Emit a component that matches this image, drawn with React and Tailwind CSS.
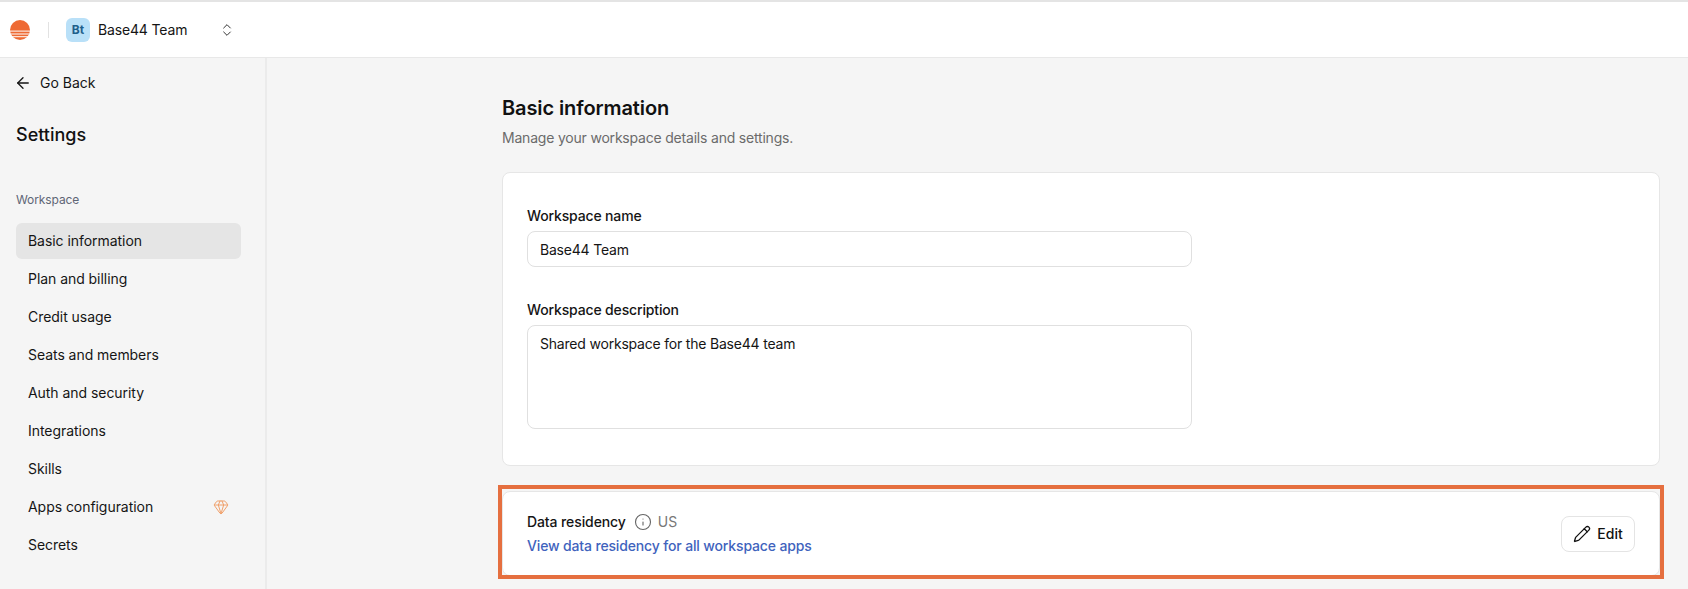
import { ArrowLeft, ChevronsUpDown, Gem, Info, Pencil } from 'lucide-react'

const NAV_ITEMS = [
  'Basic information',
  'Plan and billing',
  'Credit usage',
  'Seats and members',
  'Auth and security',
  'Integrations',
  'Skills',
  'Apps configuration',
  'Secrets',
]

function Logo() {
  return (
    <svg viewBox="0 0 20 20" className="h-5 w-5 shrink-0">
      <defs>
        <clipPath id="sun">
          <circle cx="10" cy="10" r="10" />
        </clipPath>
      </defs>
      <g clipPath="url(#sun)" fill="#ee6a34">
        <rect x="0" y="0" width="20" height="10.6" />
        <rect x="0" y="11.6" width="20" height="1.9" />
        <rect x="0" y="14.5" width="20" height="1.7" />
        <rect x="0" y="17.2" width="20" height="2.8" />
      </g>
    </svg>
  )
}

function Header() {
  return (
    <header className="flex h-[58px] shrink-0 items-center border-t-2 border-b border-t-[#e4e4e4] border-b-[#e8e8e8] bg-white pl-[10px]">
      <Logo />
      <div className="ml-[18px] h-4 w-px bg-[#e2e2e2]" />
      <div className="ml-[17px] flex h-6 w-6 items-center justify-center rounded-md bg-[#b9e0f8] text-[12px] font-bold text-[#1f5f8b]">
        Bt
      </div>
      <span className="ml-2 w-[120px] text-sm tracking-[-0.15px] text-[#151515]">Base44 Team</span>
      <ChevronsUpDown className="ml-[1px] h-4 w-4 text-[#333]" strokeWidth={1.5} />
    </header>
  )
}

function Sidebar() {
  return (
    <aside className="w-[267px] shrink-0 border-r-2 border-[#ebebeb] px-4 pt-[15px]">
      <button type="button" className="-ml-[2px] flex items-center gap-2 text-sm text-[#151515]">
        <ArrowLeft className="h-[18px] w-[18px]" strokeWidth={1.75} />
        Go Back
      </button>
      <h2 className="mt-[28px] text-lg font-medium leading-7 text-[#111]">Settings</h2>
      <p className="mt-[43px] text-xs tracking-[-0.1px] text-[#5f6675]">Workspace</p>
      <nav className="mt-[15px] flex w-[225px] flex-col gap-[2px]">
        {NAV_ITEMS.map((item, i) => (
          <div
            key={item}
            className={`flex h-9 items-center justify-between rounded-md px-3 text-sm tracking-[-0.05px] text-[#151515] ${
              i === 0 ? 'bg-[#e5e5e5]' : ''
            }`}
          >
            {item}
            {item === 'Apps configuration' && (
              <Gem className="h-4 w-4 text-[#f0a06a]" strokeWidth={1.5} />
            )}
          </div>
        ))}
      </nav>
    </aside>
  )
}

function Main() {
  return (
    <main className="flex-1 pl-[235px] pr-7 pt-[36px]">
      <h1 className="text-xl font-semibold leading-7 tracking-[-0.1px] text-[#111]">Basic information</h1>
      <p className="mt-[6px] text-sm tracking-[-0.2px] text-[#6b6b6b]">Manage your workspace details and settings.</p>

      <section className="mt-[24px] h-[294px] rounded-lg border border-[#e6e6e6] bg-white px-6 pt-[33px]">
        <label className="block text-sm font-medium leading-5 tracking-[-0.15px] text-[#151515]">Workspace name</label>
        <input
          readOnly
          value="Base44 Team"
          className="mt-[5px] block h-9 w-[665px] rounded-lg border border-[#e0e0e0] bg-white px-3 text-sm tracking-[-0.2px] text-[#151515] outline-none"
        />
        <label className="mt-[33px] block text-sm font-medium leading-5 tracking-[-0.15px] text-[#151515]">
          Workspace description
        </label>
        <textarea
          readOnly
          value="Shared workspace for the Base44 team"
          className="mt-[5px] block h-[104px] w-[665px] resize-none rounded-lg border border-[#e0e0e0] bg-white px-3 py-2 text-sm tracking-[-0.2px] text-[#151515] outline-none"
        />
      </section>

      <section className="relative mt-[25px] flex h-[85px] items-center justify-between rounded-lg border border-[#e6e6e6] bg-white pl-6 pr-6">
        <div>
          <div className="flex items-center text-sm leading-5">
            <span className="font-medium tracking-[-0.1px] text-[#151515]">Data residency</span>
            <Info className="ml-[8px] h-[18px] w-[18px] text-[#666]" strokeWidth={1.5} />
            <span className="ml-[6px] text-[#777]">US</span>
          </div>
          <a href="#" className="mt-[4px] block text-sm font-medium leading-5 tracking-[-0.15px] text-[#3f63bd]">
            View data residency for all workspace apps
          </a>
        </div>
        <button
          type="button"
          className="flex h-9 w-[74px] items-center justify-center gap-[6px] rounded-lg border border-[#e4e4e4] bg-white text-sm font-medium text-[#111]"
        >
          <Pencil className="h-[18px] w-[18px]" strokeWidth={1.75} />
          Edit
        </button>
        <div className="pointer-events-none absolute -top-[7px] -right-[5px] -bottom-[4px] -left-[5px] border-4 border-[#e56f3f]" />
      </section>
    </main>
  )
}

export default function App() {
  return (
    <div className="flex h-[589px] w-[1688px] flex-col overflow-hidden bg-[#f5f5f5] font-['Inter',sans-serif]">
      <Header />
      <div className="flex min-h-0 flex-1">
        <Sidebar />
        <Main />
      </div>
    </div>
  )
}
